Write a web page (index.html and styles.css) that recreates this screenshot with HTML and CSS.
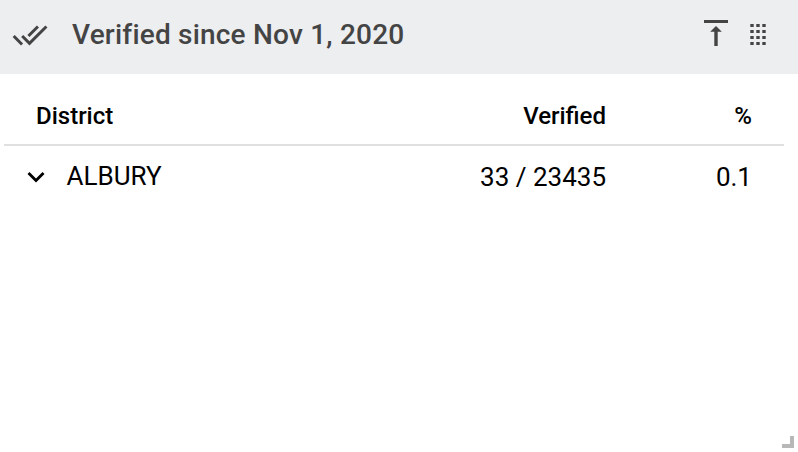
FILE: index.html
```html
<!DOCTYPE html>
<html lang="en">
<head>
    <meta charset="UTF-8">
    <meta name="viewport" content="width=device-width, initial-scale=1.0">
    <title>Verified</title>
    <link rel="stylesheet" href="styles.css">
</head>
<body>
    <section class="widget">
        <header class="widget-header">
            <svg class="icon icon-done" viewBox="0 0 24 24"><path d="M18 7l-1.41-1.41-6.34 6.34 1.41 1.41L18 7zm4.24-1.41L11.66 16.17 7.48 12l-1.41 1.41L11.66 19l12-12-1.42-1.41zM.41 13.41L6 19l1.41-1.41L1.83 12 .41 13.41z"/></svg>
            <h2>Verified since Nov 1, 2020</h2>
            <svg class="icon icon-top" viewBox="0 0 24 26"><path d="M0 0h24v3H0zM12 6l5.8 5.8h-4.1V26h-3.4V11.8H6.2z"/></svg>
            <svg class="icon icon-drag" viewBox="0 0 16 22"><path d="M.3 0h3.4v3H.3zM6.3 0h3.4v3H6.3zM12.3 0h3.4v3h-3.4zM.3 6h3.4v3H.3zM6.3 6h3.4v3H6.3zM12.3 6h3.4v3h-3.4zM.3 12h3.4v3H.3zM6.3 12h3.4v3H6.3zM12.3 12h3.4v3h-3.4zM.3 18h3.4v3H.3zM6.3 18h3.4v3H6.3zM12.3 18h3.4v3h-3.4z"/></svg>
        </header>

        <div class="table">
            <div class="row row-head">
                <span class="name">District</span>
                <span class="verified">Verified</span>
                <span class="percent">%</span>
            </div>
            <div class="row">
                <svg class="icon icon-expand" viewBox="0 0 17 11"><path d="M2 0l6.5 6.4L15 0l2 2-8.5 8.5L0 2z"/></svg>
                <span class="name">ALBURY</span>
                <span class="verified">33 / 23435</span>
                <span class="percent">0.1</span>
            </div>
        </div>

        <!-- Resize handle -->
        <span class="resize-handle"></span>
    </section>
</body>
</html>
```
FILE: styles.css
```css
/* General Styles */
body {
    font-family: Roboto, Arial, sans-serif;
    margin: 0;
    color: #000;
    background: #fff;
}

.widget {
    position: relative;
    height: 452px;
    overflow: hidden;
}

.icon {
    display: block;
    flex: none;
    fill: currentColor;
}

/* Header */
.widget-header {
    display: flex;
    align-items: center;
    box-sizing: border-box;
    height: 74px;
    padding: 0 32px 5px 12px;
    background: #edeef0;
    color: #444;
}

.widget-header h2 {
    flex: 1;
    margin: 0 0 0 24px;
    font-size: 28px;
    font-weight: 500;
    line-height: 36px;
    letter-spacing: 0.2px;
}

.icon-done {
    width: 36px;
    height: 36px;
}

.icon-top {
    width: 24px;
    height: 26px;
    margin: 0 22px 3px 0;
}

.icon-drag {
    width: 16px;
    height: 22px;
}

/* Table */
.table {
    margin: 0 14px 0 4px;
}

.row {
    display: flex;
    align-items: center;
    box-sizing: border-box;
    height: 62px;
    padding: 0 32px 0 23px;
    font-size: 26px;
}

.row-head {
    height: 72px;
    padding: 14px 32px 0;
    border-bottom: 2px solid #e0e0e0;
    font-size: 24px;
    font-weight: 500;
}

.name {
    flex: 1;
}

.icon-expand + .name {
    padding-bottom: 2px;
}

.verified {
    width: 200px;
    text-align: right;
}

.percent {
    width: 146px;
    text-align: right;
}

.icon-expand {
    width: 18px;
    height: 11px;
    margin-right: 21.5px;
}

/* Resize handle */
.resize-handle {
    position: absolute;
    right: 4px;
    bottom: 4px;
    width: 8px;
    height: 8px;
    border-right: 4px solid #b8b8b8;
    border-bottom: 4px solid #b8b8b8;
}
```
